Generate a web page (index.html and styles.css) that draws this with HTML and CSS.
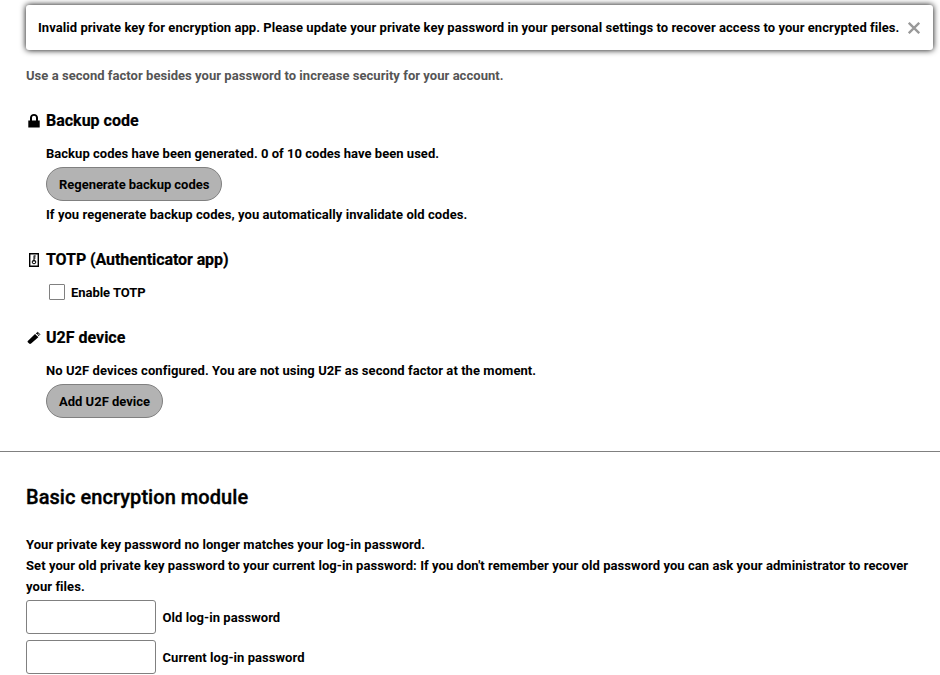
FILE: index.html
```html
<!DOCTYPE html>
<html lang="en">
<head>
<meta charset="utf-8">
<title>Security settings</title>
<link rel="stylesheet" href="styles.css">
</head>
<body>
<div class="toast" role="alert">
  <span>Invalid private key for encryption app. Please update your private key password in your personal settings to recover access to your encrypted files.</span>
  <svg class="close" viewBox="0 0 12 12" aria-hidden="true"><path d="M.8.8l10.4 10.4M11.2.8L.8 11.2"/></svg>
</div>
<section class="two-factor">
  <p class="hint">Use a second factor besides your password to increase security for your account.</p>
  <div class="provider backup">
    <h3><svg class="icon" viewBox="0 0 16 16"><path fill-rule="evenodd" d="M8 2C5.800 2 4 3.600 4 5.800V8.500H2.300V15.600h11.400V8.500H12V5.800C12 3.600 10.200 2 8 2zm0 1.800c1.200 0 2 .8 2 2v2.700H6V5.800c0-1.200.8-2 2-2z"/></svg>Backup code</h3>
    <p class="status">Backup codes have been generated. 0 of 10 codes have been used.</p>
    <button class="btn regenerate">Regenerate backup codes</button>
    <p class="note">If you regenerate backup codes, you automatically invalidate old codes.</p>
  </div>
  <div class="provider totp">
    <h3 class="long"><svg class="icon" viewBox="0 0 16 16"><path class="outline" d="M3.700 2.700h8.600v12.600H3.700z"/><circle class="outline thin" cx="8" cy="11" r="1.800"/><path class="outline thin" d="M8 11V4.500M8 5h1.800M8 7h1.500"/></svg>TOTP (Authenticator app)</h3>
    <label class="check"><input type="checkbox">Enable TOTP</label>
  </div>
  <div class="provider u2f">
    <h3><svg class="icon" viewBox="0 0 16 16"><path d="M1.800 12L9 5l3.300 3.300-7.200 6.300c-.8.600-1.500.5-2-.1l-1.300-1.200c-.4-.5-.4-.9 0-1.300z"/><path class="outline thin" d="M9.800 5l1.900-1.800 2.100 2.200L11.900 7.300"/><path d="M10.700 4.700l1-.9 1.200 1.300-1 .9z"/></svg>U2F device</h3>
    <p class="note">No U2F devices configured. You are not using U2F as second factor at the moment.</p>
    <button class="btn">Add U2F device</button>
  </div>
</section>
<section class="encryption">
  <h2>Basic encryption module</h2>
  <p>Your private key password no longer matches your log-in password.<br><span class="note">Set your old private key password to your current log-in password: If you don't remember your old password you can ask your administrator to recover your files.</span></p>
  <label class="field"><input type="password">Old log-in password</label>
  <label class="field"><input type="password">Current log-in password</label>
</section>
</body>
</html>
```
FILE: styles.css
```css
* { box-sizing: border-box; }
body {
  margin: 0;
  height: 675px;
  overflow: hidden;
  background: #fff;
  color: #000;
  font: bold 13px/21px Roboto, sans-serif;
  letter-spacing: 0.052px;
}
p, h2, h3 { margin: 0; }
.toast {
  display: flex;
  align-items: center;
  height: 45px;
  margin: 5px 7px 0 26px;
  padding-left: 12px;
  border-radius: 3px;
  box-shadow: 0 0 6px 0 #000;
  white-space: nowrap;
}
.close {
  width: 12px;
  height: 12px;
  margin-left: 9px;
  fill: none;
  stroke: #999;
  stroke-width: 2.3;
}
.two-factor {
  height: 402px;
  padding: 15px 26px 0;
  border-bottom: 1px solid #808080;
}
.hint { color: #555; letter-spacing: 0.04px; }
.status { letter-spacing: 0.03px; }
.note { letter-spacing: 0.065px; }
.provider { padding-left: 20px; }
.backup { margin-top: 22px; }
.totp { margin-top: 22px; }
.u2f { margin-top: 23px; }
h3 {
  display: flex;
  align-items: center;
  height: 24px;
  margin: 0 0 11px -20px;
  font-size: 16px;
  font-weight: 700;
  letter-spacing: 0;
  -webkit-text-stroke: 0.2px #000;
}
h3.long { letter-spacing: -0.08px; }
.icon {
  width: 16px;
  height: 16px;
  margin-right: 4px;
  stroke: none;
}
.outline { fill: none; stroke: #000; stroke-width: 1.4; }
.outline.thin { stroke-width: 1; }
.btn {
  display: block;
  height: 34px;
  margin: 3px 0;
  padding: 0 12px;
  border: 1px solid #808080;
  border-radius: 17px;
  background: #b3b3b3;
  color: #000;
  font: inherit;
}
.btn.regenerate { letter-spacing: -0.04px; }
.check {
  display: flex;
  align-items: center;
  height: 20px;
  letter-spacing: -0.04px;
}
.check input {
  appearance: none;
  width: 16px;
  height: 16px;
  margin: 0 6px 0 3px;
  border: 1px solid #808080;
  border-radius: 1px;
}
.encryption { padding: 30px 26px 0; }
h2 {
  margin-bottom: 22px;
  font-size: 20px;
  line-height: 30px;
  font-weight: 500;
  -webkit-text-stroke: 0.35px #000;
}
.field {
  display: flex;
  align-items: center;
  margin: 3px 0 6px;
}
.field + .field { margin-top: 0; }
.field input {
  width: 130px;
  height: 34px;
  margin: 0 6.500px 0 0;
  border: 1px solid #808080;
  border-radius: 3px;
  background: #fff;
}
```
